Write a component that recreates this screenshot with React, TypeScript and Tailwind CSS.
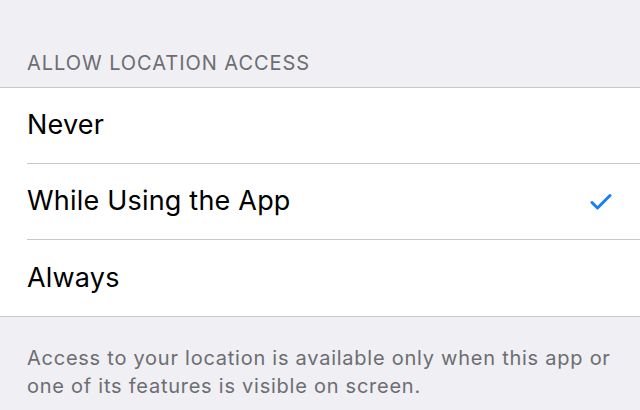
import React from "react";

const options = ["Never", "While Using the App", "Always"];

const App: React.FC = () => {
  const selected = 1;

  return (
    <main
      className="w-[640px] h-[410px] overflow-hidden bg-[#efeff4]"
      style={{ fontFamily: "Inter, 'Liberation Sans', sans-serif" }}
    >
      <div className="h-[87px] flex items-end pl-[27px] pb-[12px]">
        <h2 className="text-[20px] leading-[24px] tracking-[0.95px] text-[#6d6d72]">ALLOW LOCATION ACCESS</h2>
      </div>

      <ul className="bg-white border-y border-[#c8c7cc]">
        {options.map((label, i) => (
          <li key={label} className="pl-[27px]">
            <div
              className={
                "h-[76px] flex items-center justify-between pr-[28px] " +
                (i < options.length - 1 ? "border-b border-[#c8c7cc]" : "")
              }
            >
              <span className="text-[27px] tracking-[0.2px] text-black">{label}</span>
              {i === selected && (
                <svg width="22" height="18" viewBox="0 0 22 18" fill="none">
                  <polyline
                    points="2,9.5 7.5,15 20,2.5"
                    stroke="#157efb"
                    strokeWidth="3"
                    strokeLinecap="round"
                    strokeLinejoin="round"
                  />
                </svg>
              )}
            </div>
          </li>
        ))}
      </ul>

      <p className="pl-[27px] pr-[20px] pt-[27px] text-[20px] leading-[28px] tracking-[0.75px] text-[#6d6d72]">
        Access to your location is available only when this app or one of its features is visible on screen.
      </p>
    </main>
  );
};

export default App;
